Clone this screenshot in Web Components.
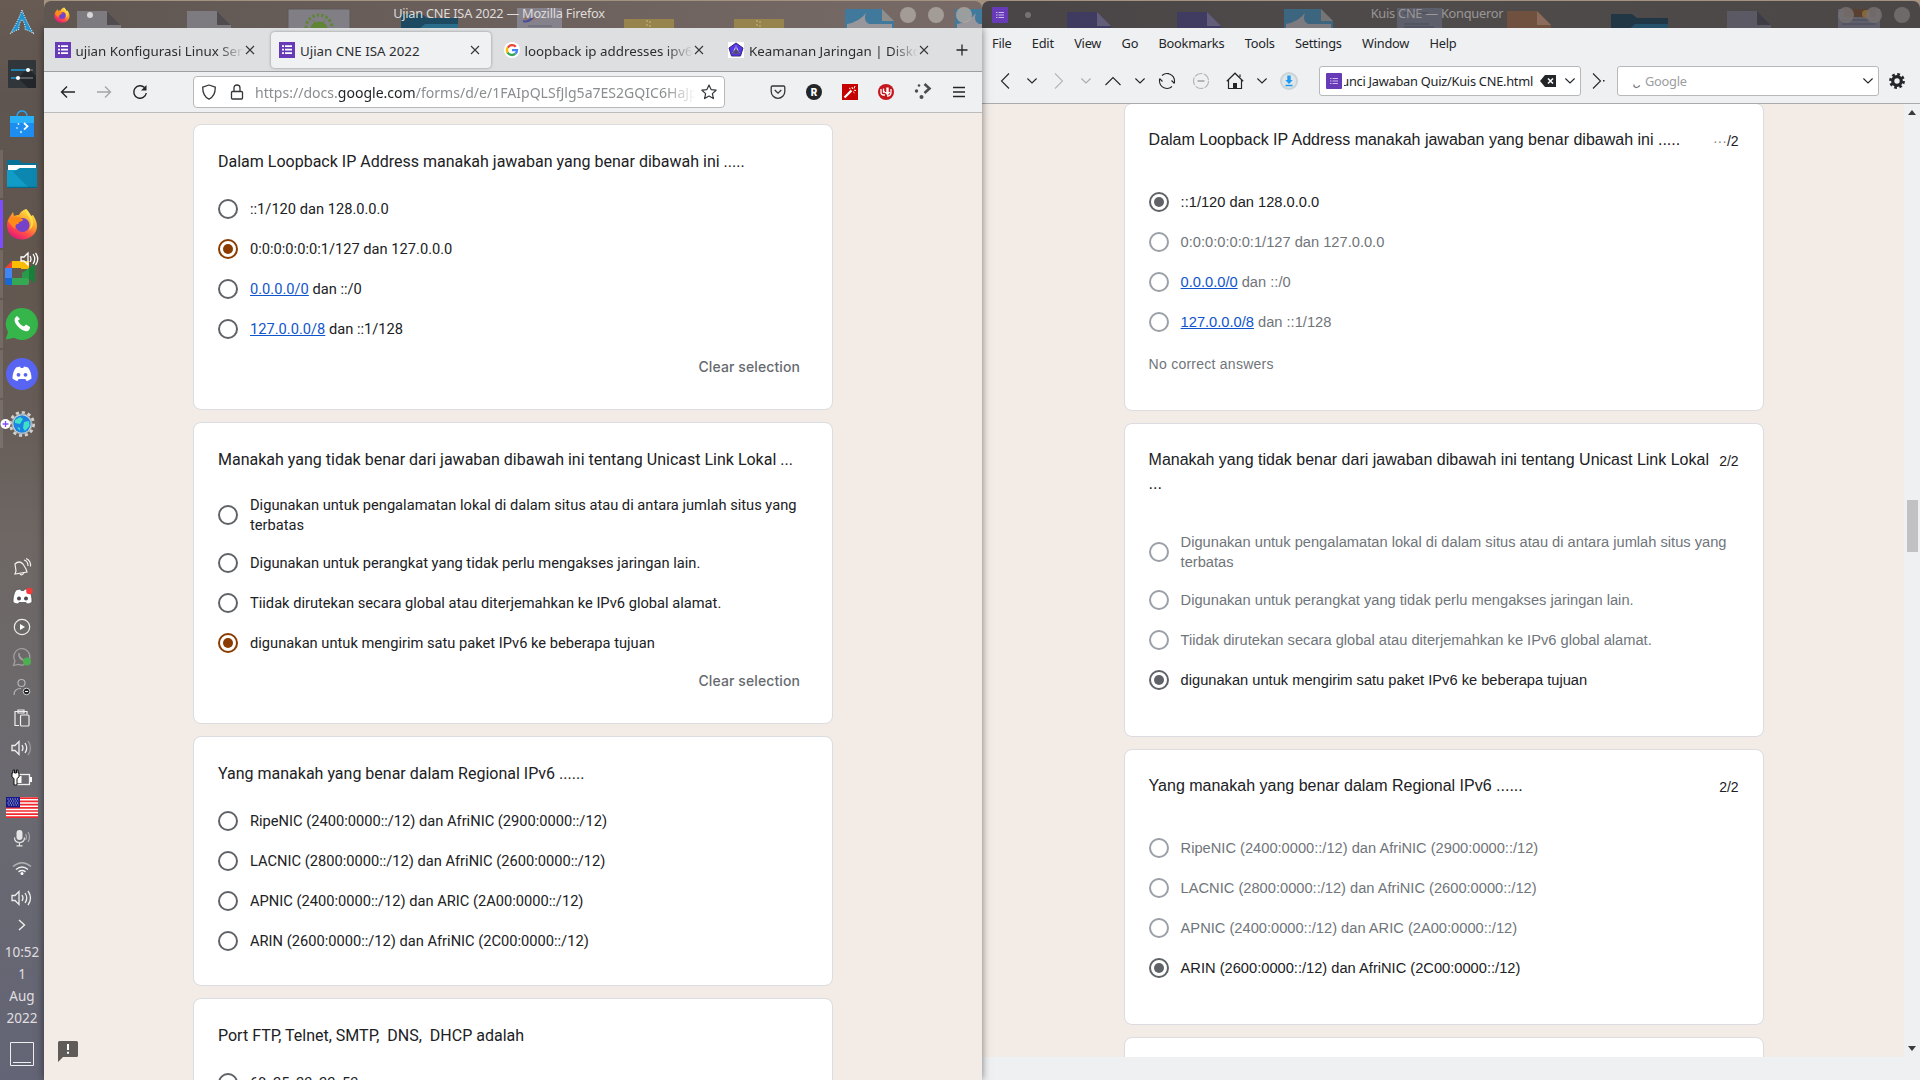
<!DOCTYPE html>
<html lang="id">
<head>
<meta charset="utf-8">
<title>Desktop</title>
<style>
html,body{margin:0;padding:0;width:1920px;height:1080px;overflow:hidden;background:#a3927f}
body{font-family:"Noto Sans",sans-serif;font-size:13.33px;color:#232629}
</style>
</head>
<body>
<desktop-shell></desktop-shell>
<script>
const ICONS = {
arch:[26,30,`<path d="M13 1C11.500 5.500 7 16 1 25c4-3 6.500-4 9-4.500-.5-4 .8-7.500 3-10 2.200 2.500 3.500 6 3 10 2.500.5 5 1.500 9 4.500C19 16 14.500 5.500 13 1z" fill="#1f95d3" stroke="#dff1fb" stroke-width="1" stroke-dasharray="1.200 1.200"/>`],
settings:[28,28,`<rect width="28" height="28" rx="1" fill="#31363b"/><path d="M10 18l10-10 8 8v12h-8z" fill="#23272b"/><path d="M3 10h17M3 18h7" stroke="#1d99d6" stroke-width="1.500"/><path d="M20 10h5M10 18h15" stroke="#6a6e72" stroke-width="1.500"/><circle cx="20" cy="10" r="2" fill="#fff"/><circle cx="10" cy="18" r="2" fill="#fff"/>`],
bag:[24,28,`<path d="M7 8V5.500Q8 1 12 1t5 4.500V8" fill="none" stroke="#2aa4ee" stroke-width="1.300"/><path d="M0 6h24v21H0z" fill="#1d8df0"/><path d="M0 6h24v7H0z" fill="#28b0f8"/><path d="M14 13l3.500 3.300-3.500 3.300" stroke="#fff" stroke-width="1.800" fill="none"/><circle cx="8.500" cy="14" r=".9" fill="#d8f0ff"/><circle cx="7" cy="18" r="1" fill="#9fdcff"/><circle cx="11" cy="22" r="1.200" fill="#9fdcff"/>`],
folder:[30,28,`<path d="M0 0h12l3 3h15v8H0z" fill="#067298"/><path d="M1 5h28v6H1z" fill="#fff"/><path d="M0 10h10l3-2h17v20H0z" fill="#109cc6"/><path d="M13 8h17v20H22L6 12z" fill="#0c87b0"/><path d="M0 26.800h30V28H0z" fill="#05688c"/>`],
firefox:[32,32,`<defs><linearGradient id="a" x1=".85" y1="0" x2=".25" y2="1"><stop offset="0" stop-color="#fff44f"/><stop offset=".4" stop-color="#ffa52a"/><stop offset=".7" stop-color="#ff4b4b"/><stop offset="1" stop-color="#e3127e"/></linearGradient></defs><path d="M20 1c3 3 4 5 5 7l2-1c2 3 4 7 4 11 0 8-7 13.500-15 13.500S1 26 1 17.500c0-4 1.500-8 4-10.500l2-3 1 4c2-1 3-1 5-1 1-3 4-5 7-6z" fill="url(#a)"/><circle cx="16.500" cy="17" r="7" fill="#7542c9"/><path d="M1.500 13c3-3 6-5 11-4 2 0 3 2 5 3-2 2-5 1-5 4-3 0-4 2-3 5-5-3-5-6-8-8z" fill="#ff8a16"/><path d="M20 1c-1 6 5 8 5 14 0 3-1 5-2 7 4-2 6-9 2-14-1-2-2-4-5-7z" fill="#ffe04a"/>`],
meet:[34,48,`<path d="M7 11h17v8h-8v-1H7z" fill="#fbbc04"/><path d="M7 11v7H0z" fill="#ea4335"/><path d="M0 18h7v10H0z" fill="#4285f4"/><path d="M0 28h7v7H2q-2 0-2-2z" fill="#1967d2"/><path d="M7 28h17v5q0 2-2 2H7z" fill="#34a853"/><path d="M17 23l13-9v19l-13-9z" fill="#188038"/><path d="M24 18.200V28h-7v-5z" fill="#2a9a4a"/><path d="M16 7h3l4-4v12l-4-4h-3z" fill="none" stroke="#fff" stroke-width="1.300"/><path d="M25 6q2 3 0 6M28 4q3.500 5 0 10M30.500 3q4.500 6 0 12" fill="none" stroke="#fff" stroke-width="1.300"/>`],
whatsapp:[34,34,`<path d="M17 1a16 16 0 1 1-8 29.800L.8 32.500 3 25A16 16 0 0 1 17 1z" fill="#35b54a"/><path d="M12 9c-3 2-3 5-1 8s5 6 9 7c3 1 5-1 5-4l-4-2.500-2 2c-3-1-5-3-6-6l2-1.500z" fill="#fff"/>`],
discord:[32,32,`<circle cx="16" cy="16" r="16" fill="#5865f2"/><path d="M10 9.500l4-1 .8 1.500h2.400l.8-1.500 4 1c2.500 3 3.500 7 3.500 11-2 1.700-3.500 2-5 2.500l-1.200-2h-6.600l-1.200 2c-1.500-.5-3-.8-5-2.500 0-4 1-8 3.500-11z" fill="#fff"/><circle cx="12.500" cy="16.800" r="1.900" fill="#5865f2"/><circle cx="19.500" cy="16.800" r="1.900" fill="#5865f2"/>`],
konq:[44,30,`<circle cx="22" cy="15" r="11" fill="none" stroke="#cfd0d0" stroke-width="4" stroke-dasharray="3 2.700"/><circle cx="22" cy="15" r="10" fill="#d8d9d9" stroke="#a5a5a5"/><circle cx="22" cy="15" r="8.700" fill="#1b83e2"/><path d="M15 11l5-3 3 2-3 5-5-1zM24 13l5-1 .5 5-4.500 5-2-3zM17 18l3 1v3z" fill="#3fe0c8"/><circle cx="5.500" cy="15" r="5" fill="#fff"/><path d="M2.500 15h6M5.500 12v6" stroke="#7c4dff" stroke-width="1.300"/>`],
bell:[18,18,`<g fill="none" stroke="#eee" stroke-width="1.200"><path d="M2 6q4-4 8 0l3 5 1 3-12 2 1-3z"/><path d="M7 16q2 2 4-1M11 2q4 1 4 6M13 .5q5 2 4.500 8"/></g>`],
discordTray:[24,20,`<path d="M6 3l4-1 1 1.500h3l1-1.500 4 1c2 3 3 7 3 12-2 1.700-3 1.500-5 2l-1-1.500H9L8 17c-2-.5-3-.3-5-2 0-5 1-9 3-12z" fill="#fff" stroke="#3b3b3b" stroke-width=".6"/><circle cx="9" cy="11.500" r="2" fill="#4a4a50"/><circle cx="16" cy="11.500" r="2" fill="#4a4a50"/><circle cx="19.500" cy="4" r="3.300" fill="#f03c3c"/>`],
play:[18,18,`<circle cx="9" cy="9" r="7.700" fill="none" stroke="#eee" stroke-width="1.200"/><path d="M7 6l5 3-5 3z" fill="#fff"/>`],
waTray:[20,20,`<path d="M10 1.500A8.300 8.300 0 1 1 6 17.300L1.500 18.500 3 14A8.300 8.300 0 0 1 10 1.500z" fill="none" stroke="#a2a1a3" stroke-width="1.200"/><path d="M7 6q-1 6 7 8" stroke="#a2a1a3" stroke-width="1.500" fill="none"/><circle cx="15" cy="14.500" r="4" fill="#4caf50"/>`],
user:[18,18,`<circle cx="8.500" cy="5" r="3.500" fill="none" stroke="#b5b4b6" stroke-width="1.200"/><path d="M1 17q0-6.500 7-6.500" fill="none" stroke="#b5b4b6" stroke-width="1.200"/><circle cx="13.500" cy="13.500" r="3.300" fill="#232629" stroke="#ccc"/><path d="M12 13.500h3" stroke="#fff"/>`],
clip:[18,18,`<g fill="none" stroke="#eee" stroke-width="1.200"><path d="M6 16.500H2v-14h12v3"/><path d="M5 1h6v3H5z"/><rect x="7.500" y="6" width="8.500" height="11" rx="1"/></g>`],
vol:[22,18,`<g fill="none" stroke="#eee" stroke-width="1.300"><path d="M1 6.500h3l4-4v13l-4-4H1z"/><path d="M11 6q2 3 0 6M14 4q3.500 5 0 10"/><path d="M17 2q5 7 0 14"/></g>`],
volLow:[22,18,`<g fill="none" stroke="#eee" stroke-width="1.300"><path d="M1 6.500h3l4-4v13l-4-4H1z"/><path d="M11 6q2 3 0 6M14 4q3.500 5 0 10"/><path d="M17 2q5 7 0 14" stroke="#98979c"/></g>`],
battery:[22,18,`<rect x="4.500" y="5.500" width="14" height="10" fill="none" stroke="#eee" stroke-width="1.300"/><path d="M6 7h4.500v7H6zM19 8h2v5h-2z" fill="#fff"/><path d="M2 1v3H1v4l2 1.500V16h3V9.500L8 8V4H7V1H5.500v3h-2V1z" fill="#fff" stroke="#111" stroke-width="1"/>`],
flag:[32,21,`<path d="M0 0h32v21H0z" fill="#fff"/><path d="M0 1.200h32M0 4.400h32M0 7.600h32M0 10.800h32M0 14h32M0 17.200h32M0 20.200h32" stroke="#f1282d" stroke-width="1.700"/><path d="M0 0h14v10.500H0z" fill="#141a8a"/><path d="M1.500 2h12M2.500 4h10M1.500 6h12M2.500 8h10" stroke="#e4e4f4" stroke-dasharray="1 1.400"/>`],
mic:[18,18,`<rect x="3.500" y="1" width="6" height="10" rx="3" fill="#e6e6e6"/><path d="M1.500 8.500q0 5 5 5t5-5M6.500 13.500V17M3.500 16.800h6" fill="none" stroke="#e6e6e6" stroke-width="1.200"/><path d="M12.500 5q2 3 0 6M15 3q3 5 0 10" fill="none" stroke="#a9a8ac" stroke-width="1.200"/>`],
wifi:[20,14,`<g fill="none" stroke="#f2f2f2" stroke-width="1.500"><path d="M1 5.500q9-7.500 18 0" stroke="#b0afb3"/><path d="M4 8.500q6-5 12 0"/><path d="M6.500 10.800q3.500-2.500 7 0"/></g><circle cx="10" cy="12.500" r="1.500" fill="#fff"/>`],
chevR:[10,18,`<path d="M2 1l5.500 5L2 11" fill="none" stroke="#eee" stroke-width="1.400"/>`],
showdesk:[24,24,`<path d="M.5.5h23v23H.5zM3 20.500h18" fill="none" stroke="#eee"/>`],
forms:[16,16,`<path d="M0 0h16v16H0z" fill="#673ab7"/><path d="M3 4.200h2M3 7.700h2M3 11.200h2M6 4.200h7M6 7.700h7M6 11.200h7" stroke="#fff" stroke-width="1.700"/>`],
formsSm:[16,16,`<rect width="16" height="16" rx="1" fill="#673ab7"/><path d="M4 5.500h1.500M4 8h1.500M4 10.500h1.500M6.500 5.500H12M6.500 8H12M6.500 10.500H12" stroke="#cbb8ec" stroke-width="1"/>`],
google:[16,16,`<circle cx="8" cy="8" r="8" fill="#fff"/><g fill="none" stroke-width="2.300"><path d="M11.800 4.800A5 5 0 0 0 3.800 5.700" stroke="#ea4335"/><path d="M3.600 5.500a5 5 0 0 0 .2 5.300" stroke="#fbbc05"/><path d="M3.600 10.500a5 5 0 0 0 7.700 1.200" stroke="#34a853"/><path d="M8 8.200h5a5 5 0 0 1-1.600 3.500" stroke="#4285f4"/></g>`],
pens:[16,16,`<path d="M0 0h16v16H0z" fill="#fff"/><path d="M8 1l7 5-2.500 8h-9L1 6z" fill="#5a35e8" stroke="#2e2a7a"/><path d="M8 3l3.500 8h-7z" fill="#d8cffc"/><path d="M5 12h6V9.500L8 7 5 9.500z" fill="#55526e"/><path d="M8 4v7" stroke="#3b35b0"/>`],
close:[12,12,`<path d="M2 2l8 8M10 2l-8 8" stroke="#33373a" stroke-width="1.100"/>`],
plus:[14,14,`<path d="M7 1.500v11M1.500 7h11" stroke="#232629" stroke-width="1.300"/>`],
ffBack:[16,16,`<path d="M15 8H1.500M7 2.500L1.500 8 7 13.500" fill="none" stroke="#232629" stroke-width="1.400"/>`],
ffFwd:[16,16,`<path d="M1 8h13.500M9 2.500L14.500 8 9 13.500" fill="none" stroke="#a3a5a7" stroke-width="1.300"/>`],
ffReload:[16,16,`<path d="M12.500 3.500A6.300 6.300 0 1 0 14.300 9" fill="none" stroke="#232629" stroke-width="1.400"/><path d="M14.500 1v5.500H9z" fill="#232629"/>`],
shield:[16,16,`<path d="M8 1l6.300 2.200C14.300 9 12.500 13 8 15.200 3.500 13 1.700 9 1.700 3.200z" fill="none" stroke="#33373a" stroke-width="1.300" stroke-linejoin="round"/>`],
lock:[14,16,`<rect x="1.500" y="7.500" width="11" height="7.500" rx="1" fill="none" stroke="#33373a" stroke-width="1.300"/><path d="M4 7V4q0-3 3-3t3 3v3" fill="none" stroke="#33373a" stroke-width="1.300"/>`],
star:[16,16,`<path d="M8 1l2.100 4.600 5 .6-3.700 3.400 1 5L8 12.100l-4.400 2.500 1-5L.9 6.200l5-.6z" fill="none" stroke="#33373a" stroke-width="1.200" stroke-linejoin="round"/>`],
pocket:[16,16,`<path d="M2.500 2h11q1.300 0 1.300 1.300V7.500a6.800 6.800 0 0 1-13.600 0V3.300Q1.200 2 2.500 2z" fill="none" stroke="#33373a" stroke-width="1.300"/><path d="M4.700 6L8 9.200 11.300 6" fill="none" stroke="#33373a" stroke-width="1.300"/>`],
rbadge:[16,16,`<circle cx="8" cy="8" r="8" fill="#232629"/><text x="8" y="11.500" font-family="Roboto" font-weight="900" font-size="10" text-anchor="middle" fill="#fff">R</text>`],
wand:[16,16,`<path d="M0 0h16v16H0z" fill="#c60000"/><path d="M2.500 13.500l7-7" stroke="#fff" stroke-width="2.300"/><path d="M10 3l.5 2M13 2l-1 2.500M14 6.500l-2-.3M12.500 9l-1.300-1.200M7 4l1.500.8" stroke="#fff"/>`],
ublock:[16,16,`<circle cx="8" cy="8" r="8" fill="#c4161c"/><path d="M3 5v3.500Q3 11 5.500 11H7M5.500 4.500V8H7M13 5v3.500q0 3.500-4 3.500" stroke="#fff" stroke-width="1.300" fill="none"/><path d="M8.300 3.500h2.400V8h1.800l-3 3.500-3-3.500h1.800z" fill="#fff"/>`],
plasma:[18,18,`<path d="M10.500 1l5 4.500-5 4.500" fill="none" stroke="#4a4d50" stroke-width="2.600"/><circle cx="5" cy="2.500" r="1.300" fill="#4a4d50"/><circle cx="2.500" cy="8" r="1.700" fill="#4a4d50"/><circle cx="7.500" cy="14" r="2" fill="#4a4d50"/>`],
burger:[14,14,`<path d="M1 2.500h12M1 7h12M1 11.500h12" stroke="#232629" stroke-width="1.300"/>`],
kBack:[10,16,`<path d="M9 .5L1.500 8 9 15.500" fill="none" stroke="#232629" stroke-width="1.100"/>`],
kFwd:[10,16,`<path d="M1 .5L8.500 8 1 15.500" fill="none" stroke="#b4b6b8" stroke-width="1.100"/>`],
kUp:[16,10,`<path d="M.5 9L8 1.500 15.500 9" fill="none" stroke="#232629" stroke-width="1.100"/>`],
down:[10,6,`<path d="M.4.500L5 5 9.600.5" fill="none" stroke="#232629" stroke-width="1.100"/>`],
downDim:[10,6,`<path d="M.4.500L5 5 9.600.5" fill="none" stroke="#a9abad" stroke-width="1.100"/>`],
kReload:[18,18,`<g fill="none" stroke="#232629" stroke-width="1.100"><path d="M4 3.500A7.500 7.500 0 0 1 16.500 9v2M14 14.500A7.500 7.500 0 0 1 1.500 9V7M13.500 8.500l3 3M4.500 9.500l-3-3M8 1.500h3"/></g>`],
kStop:[18,18,`<circle cx="9" cy="9" r="7.500" fill="none" stroke="#b4b6b8" stroke-width="1.200" stroke-dasharray="8 1.500"/><path d="M5.500 9h7" stroke="#9a9c9e" stroke-width="1.400"/>`],
home:[18,18,`<path d="M.8 9.300L9 1.200l8.200 8.100" fill="none" stroke="#232629" stroke-width="1.200"/><path d="M2.500 8v8.500h13V8M14 5V2.500" fill="none" stroke="#232629" stroke-width="1.200"/><path d="M7 11h4v6H7z" fill="#232629"/>`],
dl:[18,18,`<circle cx="9" cy="9" r="9" fill="#c9d3d8"/><circle cx="9" cy="9" r="7" fill="#dfe6e8"/><path d="M7.300 3.500h3.400V8h2L9 12 5.300 8h2zM5.500 12.700h7v1.500h-7z" fill="#1d99f3"/>`],
bksp:[16,12,`<path d="M5 0h11v12H5L0 6z" fill="#232629"/><path d="M8 3.500l5 5M13 3.500l-5 5" stroke="#fff" stroke-width="1.500"/>`],
go:[14,16,`<path d="M1 .5L8.500 8 1 15.500" fill="none" stroke="#232629" stroke-width="1.100"/><path d="M11 7h1.500v1.500H11z" fill="#232629"/>`],
tick:[8,6,`<path d="M1 1v2l2 1 2-.5L7 2" fill="none" stroke="#777" stroke-width="1.200" transform="translate(0 5.500)"/>`],
gear:[16,16,`<circle cx="8" cy="8" r="4.300" fill="none" stroke="#232629" stroke-width="3.200"/><circle cx="8" cy="8" r="6.600" fill="none" stroke="#232629" stroke-width="2.600" stroke-dasharray="2.700 2.484"/>`],
feedback:[20,21,`<path d="M1.500 0h17Q20 0 20 1.500v13q0 1.500-1.500 1.500H5l-5 5V1.500Q0 0 1.500 0z" fill="#5f5b59"/><path d="M10 3v6M10 10.800v2" stroke="#fff" stroke-width="2"/>`]
};
class UiIcon extends HTMLElement{
  connectedCallback(){
    const [w,h,d]=ICONS[this.getAttribute('name')];
    this.attachShadow({mode:'open'}).innerHTML=`<style>:host{display:block;flex:none;width:${this.getAttribute('w')||w}px}svg{display:block;width:100%;overflow:visible}</style><svg viewBox="0 0 ${w} ${h}">${d}</svg>`;
  }
}
customElements.define('ui-icon',UiIcon);

/* helper for elements whose shadow root is fixed markup */
const define=(tag,html)=>customElements.define(tag,class extends HTMLElement{
  constructor(){super();this.attachShadow({mode:'open'}).innerHTML=html;}
});
const ic=(n,w)=>`<ui-icon name="${n}"${w?` w="${w}"`:''}></ui-icon>`;

/* ---------- left dock ---------- */
define('dock-slot',`<style>:host{display:flex;height:50px;align-items:center;justify-content:center;position:relative;box-sizing:border-box}
:host([task])::before{content:"";position:absolute;left:0;top:1px;width:3px;height:48px;background:#ffffff1c}
:host([task=active])::before{background:#7c4dff}:host([small]){height:30.1px}</style><slot></slot>`);
define('desk-panel',`<style>
:host{display:flex;flex-direction:column;width:44px;height:1080px;flex:none;background:linear-gradient(#685b54 0,#5f5550 9%,#62574f 24%,#655a54 35%,#6e6764 50%,#6b6a70 72%,#636475 100%);color:#eee}
.apps{height:553px;margin-top:-1px}
.clock{display:flex;flex-direction:column;align-items:center;font-size:13.500px;line-height:22px;color:#e0dfe0;margin-top:-2.300px}
.sd{display:flex;justify-content:center;margin-top:13px}</style>
<div class="apps">
<dock-slot>${ic('arch')}</dock-slot><dock-slot>${ic('settings')}</dock-slot><dock-slot>${ic('bag')}</dock-slot>
<dock-slot task>${ic('folder')}</dock-slot><dock-slot task="active">${ic('firefox')}</dock-slot><dock-slot task>${ic('meet')}</dock-slot>
<dock-slot task>${ic('whatsapp')}</dock-slot><dock-slot task>${ic('discord')}</dock-slot><dock-slot task>${ic('konq')}</dock-slot></div>
${['bell','discordTray','play','waTray','user','clip','volLow','battery','flag','mic','wifi','vol','chevR'].map(n=>`<dock-slot small>${ic(n)}</dock-slot>`).join('')}
<div class="clock"><span>10:52</span><span>1</span><span>Aug</span><span>2022</span></div>
<div class="sd">${ic('showdesk')}</div>`);

/* ---------- title bars ---------- */
const doc=(x,y,c,f='#00000030')=>`<path d="M${x} ${y}h30l14 14v20H${x}z" fill="${c}"/><path d="M${x+30} ${y}l14 14h-14z" fill="${f}"/>`;
const shark=(x,o)=>`<g opacity="${o}"><path d="M${x} 9h37l12 12v10H${x}z" fill="#2f7fae"/><path d="M${x+2} 24q12-2 19-11q-3 8 3 11h23v7H${x+2}z" fill="#a4a4ae"/><path d="M${x+37} 9l12 12h-12z" fill="#9a9a98"/></g>`;
const SCENES={
ff:doc(33,11,'#7d7a80','#504b4c')+doc(143,11,'#7d7a80','#504b4c')
 +`<path d="M244 9h62v20h-62z" fill="#817e86" stroke="#5e5957"/><circle cx="275" cy="28" r="13" fill="none" stroke="#5f8535" stroke-width="3" stroke-dasharray="2.500 2"/><path d="M267 28q1-6 8-6t8 6zM269 20l2 3M281 20l-2 3" fill="#5f8535" stroke="#5f8535"/><path d="M357 14h21l5 4h31v11h-57z" fill="#1d4a60"/><path d="M375 29l6-5h33v5z" fill="#2a6d8a"/><path d="M473 8h45v21h-45z" fill="#85828c"/><path d="M480 17l4 4 7-3" stroke="#9a6b5a" stroke-width="2" fill="none"/><path d="M479 21q5 2 10-4" stroke="#45519c" stroke-width="2" fill="none"/><path d="M484 26h24" stroke="#626573"/>`
 +`<path d="M580 19h50v10h-50zM690 19h50v10h-50z" fill="#97844c"/><path d="M603 20v9M606 21v8M713 20v9M716 21v8" stroke="#b5a679" stroke-width="1.500" stroke-dasharray="2 2"/>`+shark(801,.75)+shark(911,.75),
kq:`<g opacity=".75">${doc(85,12,'#3d3768','#6a668a')}${doc(195,12,'#3d3768','#6a668a')}</g>`+shark(302,.55)
 +`<path d="M415 8h45v21h-45z" fill="#5d5f6b"/><path d="M422 13h24M422 24h25M422 27h30" stroke="#484a58"/>`+doc(525,11,'#70503f','#8a6b5c')
 +`<path d="M629 14h21l5 4h31v11h-57z" fill="#213746"/><path d="M647 29l6-5h33v5z" fill="#25506a"/>`+doc(745,11,'#5b5964','#3f3c45')
 +`<path d="M856 9h42v20h-42z" fill="#5f606c"/><path d="M862 9h32v8h-32z" fill="#5a4030"/><circle cx="884" cy="14" r="4" fill="#87663a"/><path d="M860 20h34M860 24h34" stroke="#484a58"/>`};
customElements.define('window-title',class extends HTMLElement{connectedCallback(){
 const s=this.getAttribute('scene'),ff=s==='ff';
 this.attachShadow({mode:'open'}).innerHTML=`<style>
:host{display:flex;height:27px;margin-top:1px;position:relative;align-items:center;overflow:hidden;border-radius:7px 7px 0 0;box-sizing:border-box;padding:0 10px;
background:${ff?'linear-gradient(90deg,#5f5652,#695e5a 40%,#786b67)':'linear-gradient(90deg,#494546,#504b4b 50%,#4c4747)'};color:${ff?'#dedbd9':'#9a9797'}}
.bg{position:absolute;left:0;top:-1px}
ui-icon,.dot,.t,.b{position:relative}
.dot{width:6px;height:6px;border-radius:50%;background:${ff?'#d8d6d4':'#767273'};margin-left:17px}
.l,.r{display:flex;align-items:center;flex:1;height:27px}
.l ui-icon{margin-top:1px}.r{justify-content:flex-end;gap:12px}
.b{width:16px;height:16px;border-radius:50%;margin-top:1px;background:${ff?'#aba49f':'#757171'};opacity:.85}
.t{font-size:12.800px;line-height:18px;margin:-3px 28px 0 0;white-space:nowrap;letter-spacing:-.25px}</style>
<svg class="bg" width="938" height="28">${SCENES[s]}</svg>
<div class="l">${ic(ff?'firefox':'formsSm',16)}<span class="dot"></span></div><span class="t"><slot></slot></span>
<div class="r"><span class="b"></span><span class="b"></span><span class="b"></span></div>`;}});

/* ---------- firefox ---------- */
customElements.define('browser-tab',class extends HTMLElement{connectedCallback(){
 this.attachShadow({mode:'open'}).innerHTML=`<style>
:host{display:flex;align-items:center;width:220px;height:36px;box-sizing:border-box;padding:0 10.500px 0 8px;margin-right:4.500px;border-radius:4px;flex:none}
:host([active]){background:#f0f1f3;box-shadow:0 0 3px #00000060}
.t{flex:1;margin:3px 0 0 5px;font-size:13.330px;line-height:20px;white-space:nowrap;overflow:hidden;color:#2b2e31}
:host(:not([active])) .t{-webkit-mask-image:linear-gradient(90deg,#000 84%,transparent)}</style>
${ic(this.getAttribute('icon'))}<span class="t"><slot></slot></span>${ic('close')}`;}});
define('firefox-toolbar',`<style>
:host{display:flex;height:40px;align-items:center;background:#eff0f2;border-bottom:1px solid #b9bbbd;box-sizing:content-box}
.n{display:flex;gap:20px;padding-left:16px;width:133px;box-sizing:content-box}
.url{display:flex;align-items:center;width:532px;height:32px;box-sizing:border-box;border:1px solid #b6b8ba;border-radius:4px;background:#fff;padding:0 7px}
.u{margin:0 5px 0 11px;flex:1;white-space:nowrap;overflow:hidden;font-size:14.050px;color:#8b8d8f;-webkit-mask-image:linear-gradient(90deg,#000 93%,transparent)}
.u b{font-weight:400;color:#232629}.e{display:flex;gap:20px;align-items:center;margin-left:45px}.g{width:13px}</style>
<div class="n">${ic('ffBack')}${ic('ffFwd')}${ic('ffReload')}</div>
<div class="url">${ic('shield')}<span class="g"></span>${ic('lock')}<span class="u">https://docs.<b>google.com</b>/forms/d/e/1FAIpQLSfJlg5a7ES2GQIC6HaJp</span>${ic('star')}</div>
<div class="e">${['pocket','rbadge','wand','ublock','plasma','burger'].map(n=>ic(n)).join('')}</div>`);

/* ---------- form cards ---------- */
customElements.define('form-option',class extends HTMLElement{connectedCallback(){
 this.attachShadow({mode:'open'}).innerHTML=`<style>
:host{display:flex;align-items:center;min-height:40px;box-sizing:border-box;padding:8px 0;font-size:14.667px;line-height:20px;color:var(--off)}
:host([on]){color:#202124}
i{width:20px;height:20px;border:2px solid var(--ring);border-radius:50%;box-sizing:border-box;margin-right:12px;flex:none;display:flex;align-items:center;justify-content:center}
:host([on]) i{border-color:var(--sel)}:host([on]) i::after{content:"";width:10px;height:10px;border-radius:50%;background:var(--sel)}
::slotted(a){color:#15c;text-decoration:underline}</style><i></i><span><slot></slot></span>`;}});
customElements.define('form-card',class extends HTMLElement{connectedCallback(){
 const sc=this.getAttribute('score'),cl=this.hasAttribute('clear'),nt=this.getAttribute('note');
 this.attachShadow({mode:'open'}).innerHTML=`<style>
:host{display:block;width:640px;box-sizing:border-box;border:1px solid #dadce0;border-radius:8px;background:#fff;padding:var(--pt) 24px var(--pb) 24px}
.h{display:flex;justify-content:space-between;min-height:var(--mh);margin-bottom:var(--mb);font-size:16px;line-height:24px;color:#202124}
.q{white-space:pre-wrap}
.s{font-size:14px;line-height:20px;padding-top:3px;margin-left:8px;white-space:nowrap}
.c{height:36px;text-align:right;font:500 14px/36px "Inter",sans-serif;color:#666a6f;padding-right:8px;letter-spacing:.1px}
.n{font-size:14px;line-height:20px;color:#70757a;padding-top:12px;letter-spacing:.25px}.d{color:#80868b}</style>
<div class="h"><span class="q">${this.getAttribute('q')}</span>${sc?`<span class="s">${sc.replace('···','<span class="d">···</span>')}</span>`:''}</div>
<slot></slot>${cl?'<div class="c">Clear selection</div>':''}${nt?`<div class="n">${nt}</div>`:''}`;}});
const opts=(list,on)=>list.map((t,i)=>`<form-option${i===on?' on':''}>${t}</form-option>`).join('');
const O1=['::1/120 dan 128.0.0.0','0:0:0:0:0:0:1/127 dan 127.0.0.0','<a>0.0.0.0/0</a> dan ::/0','<a>127.0.0.0/8</a> dan ::1/128'];
const O2=['Digunakan untuk pengalamatan lokal di dalam situs atau di antara jumlah situs yang terbatas','Digunakan untuk perangkat yang tidak perlu mengakses jaringan lain.','Tiidak dirutekan secara global atau diterjemahkan ke IPv6 global alamat.','digunakan untuk mengirim satu paket IPv6 ke beberapa tujuan'];
const O3=['RipeNIC (2400:0000::/12) dan AfriNIC (2900:0000::/12)','LACNIC (2800:0000::/12) dan AfriNIC (2600:0000::/12)','APNIC (2400:0000::/12) dan ARIC (2A00:0000::/12)','ARIN (2600:0000::/12) dan AfriNIC (2C00:0000::/12)'];
const Q1='Dalam Loopback IP Address manakah jawaban yang benar dibawah ini .....',Q2='Manakah yang tidak benar dari jawaban dibawah ini tentang Unicast Link Lokal ...',Q3='Yang manakah yang benar dalam Regional IPv6 ......';

define('firefox-window',`<style>
:host{display:flex;flex-direction:column;width:938px;height:1080px;flex:none;position:relative;z-index:2}
.clip{box-shadow:0 0 8px #00000080;position:absolute;inset:28px 0 0 0;z-index:-1}
.tabs{display:flex;align-items:center;height:43px;background:#dedfe1;border-bottom:1px solid #9c9ea0;padding:0 0 0 2.500px}
.tabs ui-icon{margin-left:10px}
.page{flex:1;background:#f3ebe5;overflow:hidden;display:flex;padding:11px 0 0 149px;position:relative;
font-family:Roboto,sans-serif;--off:#202124;--ring:#5f6368;--sel:#8a3c00;--mh:24px;--mb:15px;--pt:25px;--pb:24px}
.col{display:flex;flex-direction:column;gap:12px;height:1200px}
.fb{position:absolute;left:14px;top:928px}</style>
<div class="clip"></div>
<window-title scene="ff">Ujian CNE ISA 2022 — Mozilla Firefox</window-title>
<div class="tabs"><browser-tab icon="forms">ujian Konfigurasi Linux Serv</browser-tab><browser-tab icon="forms" active>Ujian CNE ISA 2022</browser-tab><browser-tab icon="google">loopback ip addresses ipv6</browser-tab><browser-tab icon="pens">Keamanan Jaringan | Disko</browser-tab>${ic('plus')}</div>
<firefox-toolbar></firefox-toolbar>
<div class="page"><div class="col">
<form-card q="${Q1}" clear>${opts(O1,1)}</form-card>
<form-card q="${Q2}" clear>${opts(O2,3)}</form-card>
<form-card q="${Q3}">${opts(O3,-1)}</form-card>
<form-card q="Port FTP, Telnet, SMTP,  DNS,  DHCP adalah">${opts(['69, 25, 23, 22, 53'],-1)}</form-card></div>
<div class="fb">${ic('feedback')}</div></div>`);

/* ---------- konqueror ---------- */
define('konqueror-bars',`<style>
:host{display:flex;flex-direction:column;height:75px;background:#eff0f2;border-bottom:1px solid #a9abad;font-size:12.800px;letter-spacing:-.25px}
.m{display:flex;padding:6px 0 0 10px;gap:20.400px;height:24px;line-height:18px}
.t{display:flex;align-items:center;height:30px;margin-top:8px}
.t>.i{display:flex;justify-content:center;width:27px}
.box{display:flex;align-items:center;height:30px;box-sizing:border-box;border:1px solid #b6b8ba;border-radius:3px;background:#fff;width:262px;padding:0 5px 0 6px}
.u{flex:1;display:flex;justify-content:flex-end;overflow:hidden;white-space:nowrap;margin:0 7px 0 2px}
.g{flex:1;color:#9b9d9f;margin-left:4px}</style>
<div class="m"><span>File</span><span>Edit</span><span>View</span><span>Go</span><span>Bookmarks</span><span>Tools</span><span>Settings</span><span>Window</span><span>Help</span></div>
<div class="t"><span class="i" style="margin-left:9px">${ic('kBack')}</span><span class="i">${ic('down')}</span><span class="i">${ic('kFwd')}</span><span class="i">${ic('downDim')}</span><span class="i">${ic('kUp')}</span><span class="i">${ic('down')}</span><span class="i">${ic('kReload')}</span><span class="i" style="width:41px">${ic('kStop')}</span><span class="i">${ic('home')}</span><span class="i">${ic('down')}</span><span class="i">${ic('dl')}</span>
<div class="box" style="margin-left:17px">${ic('formsSm')}<span class="u"><span>unci Jawaban Quiz/Kuis CNE.html</span></span>${ic('bksp')}<span style="width:9px"></span>${ic('down')}</div>
<span style="width:11px"></span>${ic('go')}<span style="width:11px"></span>
<div class="box" style="padding:0 5px 0 15px">${ic('tick')}<span class="g">Google</span>${ic('down')}</div>
<span style="width:10px"></span>${ic('gear')}</div>`);
define('scroll-bar',`<style>
:host{display:flex;flex-direction:column;align-items:center;width:16px;background:#eff0f1;height:953px}
.a{border:4px solid transparent;border-bottom:5px solid #3b3b3b;border-top:0;margin-top:6px}
.b{border:4px solid transparent;border-top:5px solid #3b3b3b;border-bottom:0;margin-top:auto;margin-bottom:6px}
.t{width:11px;height:52px;background:#c1c1c1;margin-top:385px}</style><span class="a"></span><span class="t"></span><span class="b"></span>`);
define('konqueror-window',`<style>
:host{display:flex;flex-direction:column;width:938px;height:1080px;flex:none;background:linear-gradient(#a3927f 0 9px,#eff0f2 9px)}
.v{display:flex;height:953px}
.page{flex:1;background:#f3ebe5;overflow:hidden;padding-left:141.600px;
font-family:"Liberation Sans",sans-serif;--off:#70757a;--ring:#9aa0a6;--sel:#5f6368;--mh:26px;--mb:28px;--pt:24px;--pb:36px}
.col{display:flex;flex-direction:column;gap:12px;margin-top:-1px}</style>
<window-title scene="kq">Kuis CNE — Konqueror</window-title>
<konqueror-bars></konqueror-bars>
<div class="v"><div class="page"><div class="col">
<form-card q="${Q1}" score="···/2" note="No correct answers">${opts(O1,0)}</form-card>
<form-card q="${Q2}" score="2/2">${opts(O2,3)}</form-card>
<form-card q="${Q3}" score="2/2">${opts(O3,3)}</form-card>
<form-card q=""></form-card></div></div><scroll-bar></scroll-bar></div>`);

define('desktop-shell',`<style>:host{display:flex;width:1920px;height:1080px;overflow:hidden}</style><desk-panel></desk-panel><firefox-window></firefox-window><konqueror-window></konqueror-window>`);
</script>
</body>
</html>
